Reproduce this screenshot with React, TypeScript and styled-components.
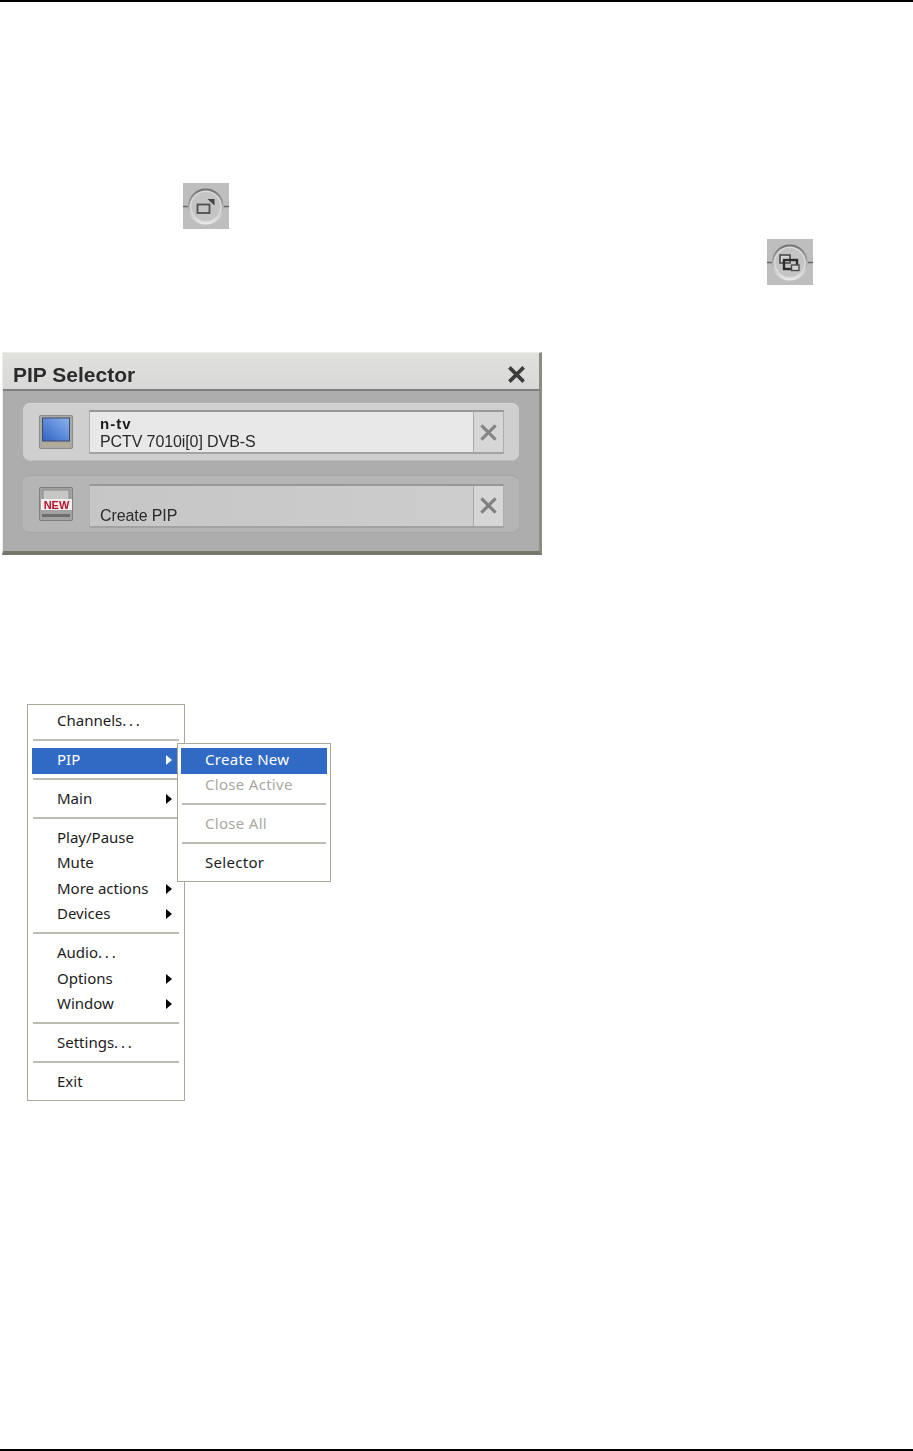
import styled, { createGlobalStyle } from "styled-components";

const GlobalStyle = createGlobalStyle`
  html, body {
    margin: 0;
    padding: 0;
    background: #ffffff;
  }
`;

const Page = styled.div`
  width: 913px;
  height: 1451px;
  display: flex;
  flex-direction: column;
  overflow: hidden;
`;

const Rule = styled.div`
  height: 2px;
  background: #000;
  flex: none;
`;

const Content = styled.div`
  flex: 1;
  display: flex;
  flex-direction: column;
`;

const IconRow = styled.div<{ $left: number; $top: number }>`
  padding-left: ${(p) => p.$left}px;
  margin-top: ${(p) => p.$top}px;
  height: 46px;
  line-height: 0;
  svg {
    filter: blur(0.5px);
  }
`;

const Selector = styled.div`
  box-sizing: border-box;
  margin: 67px 0 0 2px;
  width: 540px;
  height: 203px;
  display: flex;
  flex-direction: column;
  background: #adadad;
  border-style: solid;
  border-width: 1px 3px 4px 1px;
  border-color: #efeee6 #8d8c80 #77766a #efeee6;
  filter: blur(0.6px);
  font-family: "Liberation Sans", Arial, sans-serif;
`;

const TitleBar = styled.div`
  box-sizing: border-box;
  height: 38px;
  flex: none;
  display: flex;
  align-items: center;
  justify-content: space-between;
  padding: 7px 13px 0 10px;
  background: linear-gradient(#e0e0dd, #d8d8d8);
  border-bottom: 2px solid #7f7f7f;
`;

const Title = styled.div`
  font-size: 21px;
  font-weight: 700;
  color: #2b2b2b;
`;

const Rows = styled.div`
  display: flex;
  flex-direction: column;
  gap: 14px;
  padding: 12px 20px 0 20px;
`;

const Row = styled.div<{ $active?: boolean }>`
  box-sizing: border-box;
  height: 58px;
  display: flex;
  align-items: center;
  padding: ${(p) => (p.$active ? 0 : 3)}px 15px 0 16px;
  border-radius: 7px;
  background: ${(p) => (p.$active ? "#cfcfcf" : "#b5b5b5")};
  border-top: 1px solid ${(p) => (p.$active ? "#d8d8d8" : "#a4a4a4")};
  border-bottom: 1px solid ${(p) => (p.$active ? "#c0c0c0" : "#a6a6a6")};
`;

const Thumb = styled.div<{ $lift?: number }>`
  width: 34px;
  height: 34px;
  flex: none;
  line-height: 0;
  margin-top: ${(p) => -(p.$lift ?? 0)}px;
`;

const Field = styled.div<{ $active?: boolean }>`
  box-sizing: border-box;
  margin-left: 16px;
  width: 385px;
  height: 44px;
  padding: 0 0 1px 10px;
  display: flex;
  flex-direction: column;
  justify-content: flex-end;
  background: ${(p) =>
    p.$active ? "#e8e8e8" : "linear-gradient(90deg, #c6c6c6, #cdcdcd)"};
  border-top: 2px solid #989898;
  border-bottom: 2px solid #a2a2a2;
  border-left: 1px solid #b0b0b0;
  color: #222;
`;

const ChannelName = styled.div`
  font-size: 15px;
  font-weight: 700;
  line-height: 16px;
  letter-spacing: 1px;
  color: #1a1a1a;
`;

const ChannelLine = styled.div`
  font-size: 16px;
  line-height: 19px;
  letter-spacing: -0.1px;
  color: #2a2a2a;
`;

const RemoveBox = styled.div`
  box-sizing: border-box;
  width: 31px;
  height: 44px;
  flex: none;
  display: flex;
  align-items: center;
  justify-content: center;
  background: #d6d6d6;
  border-top: 2px solid #989898;
  border-bottom: 2px solid #a2a2a2;
  border-left: 1px solid #a8a8a8;
  border-right: 1px solid #aeaeae;
`;

const MenuWrap = styled.div`
  position: relative;
  margin: 149px 0 0 27px;
  width: 158px;
  filter: blur(0.45px);
  font-family: "Noto Sans", Tahoma, sans-serif;
  font-size: 15px;
`;

const MenuBox = styled.div`
  box-sizing: border-box;
  width: 100%;
  padding: 4px;
  background: #fff;
  border: 1px solid #a9a89f;
`;

const SubBox = styled(MenuBox)`
  position: absolute;
  left: 150px;
  top: 39px;
  width: 154px;
  padding: 4px 3px;
  letter-spacing: 0.3px;
`;

const MenuRow = styled.div<{ $hot?: boolean; $off?: boolean; $pad: number }>`
  box-sizing: border-box;
  height: 25.5px;
  display: flex;
  align-items: center;
  justify-content: space-between;
  padding: 0 8px 4px ${(p) => p.$pad}px;
  background: ${(p) => (p.$hot ? "#316ac5" : "transparent")};
  color: ${(p) => (p.$hot ? "#fff" : p.$off ? "#a9a89f" : "#1c1c1c")};
`;

const Dots = styled.span`
  letter-spacing: 2.8px;
`;

const Separator = styled.div`
  box-sizing: border-box;
  height: 13.5px;
  display: flex;
  align-items: center;
  padding: 0 1px 3px;
  &::after {
    content: "";
    flex: 1;
    height: 2px;
    background: #bdbcb3;
  }
`;

const Arrow = styled.span<{ $hot?: boolean }>`
  width: 0;
  height: 0;
  margin-top: 2px;
  border-style: solid;
  border-width: 5px 0 5px 6px;
  border-color: transparent transparent transparent ${(p) => (p.$hot ? "#fff" : "#000")};
`;

const RoundIcon = ({ children }: { children: React.ReactNode }) => (
  <svg width="46" height="46" viewBox="0 0 46 46">
    <defs>
      <linearGradient id="ringGrad" x1="0" y1="0" x2="0" y2="1">
        <stop offset="0" stopColor="#6e6e6e" />
        <stop offset="1" stopColor="#ececec" />
      </linearGradient>
    </defs>
    <rect width="46" height="46" fill="#bebebe" />
    <path d="M0 23.5H5M41 23.5H46" stroke="#666" strokeWidth="1.4" />
    <circle cx="22.8" cy="23.5" r="18" fill="url(#ringGrad)" />
    <circle cx="22.8" cy="23.5" r="16" fill="#dcdcdc" />
    <circle cx="22.8" cy="23.5" r="14.5" fill="#c4c4c4" />
    {children}
  </svg>
);

const CloseMark = ({ size, color, width }: { size: number; color: string; width: number }) => (
  <svg width={size} height={size} viewBox="0 0 16 16">
    <path d="M2 2L14 14M14 2L2 14" stroke={color} strokeWidth={width} />
  </svg>
);

const ScreenThumb = () => (
  <svg width="34" height="34" viewBox="0 0 34 34">
    <defs>
      <linearGradient id="blueGrad" x1="0" y1="1" x2="1" y2="0">
        <stop offset="0" stopColor="#2f62c4" />
        <stop offset="1" stopColor="#8db4ef" />
      </linearGradient>
    </defs>
    <rect x="0.5" y="0.5" width="33" height="33" rx="1" fill="#a9a9a7" stroke="#8a8a8a" />
    <rect x="3.5" y="3" width="27" height="23" fill="url(#blueGrad)" stroke="#3e4d66" />
    <rect x="3" y="28" width="28" height="4" fill="#b3aa99" />
  </svg>
);

const NewThumb = () => (
  <svg width="34" height="34" viewBox="0 0 34 34">
    <rect x="0.5" y="0.5" width="33" height="33" rx="1" fill="#a2a2a2" stroke="#7e7e7e" />
    <rect x="4" y="3" width="26" height="10" fill="#c6c6c4" stroke="#8a8a8a" />
    <rect x="2" y="12" width="31" height="11" fill="#f3eeee" />
    <text
      x="17.5"
      y="21.5"
      textAnchor="middle"
      fontFamily="Liberation Sans, Arial, sans-serif"
      fontSize="11"
      fontWeight="700"
      fill="#b3142c"
    >
      NEW
    </text>
    <rect x="3" y="27" width="28" height="3" fill="#6d6d6d" />
  </svg>
);

type MenuEntry =
  | "sep"
  | { label: string; dots?: boolean; arrow?: boolean; hot?: boolean; off?: boolean };

const mainMenu: MenuEntry[] = [
  { label: "Channels", dots: true },
  "sep",
  { label: "PIP", arrow: true, hot: true },
  "sep",
  { label: "Main", arrow: true },
  "sep",
  { label: "Play/Pause" },
  { label: "Mute" },
  { label: "More actions", arrow: true },
  { label: "Devices", arrow: true },
  "sep",
  { label: "Audio", dots: true },
  { label: "Options", arrow: true },
  { label: "Window", arrow: true },
  "sep",
  { label: "Settings", dots: true },
  "sep",
  { label: "Exit" },
];

const pipMenu: MenuEntry[] = [
  { label: "Create New", hot: true },
  { label: "Close Active", off: true },
  "sep",
  { label: "Close All", off: true },
  "sep",
  { label: "Selector" },
];

const renderEntries = (entries: MenuEntry[], pad: number) =>
  entries.map((entry, i) =>
    entry === "sep" ? (
      <Separator key={i} />
    ) : (
      <MenuRow key={i} $hot={entry.hot} $off={entry.off} $pad={pad}>
        <span>
          {entry.label}
          {entry.dots && <Dots>...</Dots>}
        </span>
        {entry.arrow && <Arrow $hot={entry.hot} />}
      </MenuRow>
    )
  );

const App = () => {
  return (
    <Page>
      <GlobalStyle />
      <Rule />
      <Content>
        <IconRow $left={183} $top={181}>
          <RoundIcon>
            <rect x="14.5" y="21.5" width="12" height="8.5" fill="none" stroke="#4f4f4f" strokeWidth="1.8" />
            <path d="M24.5 16H31.5V22.5Z" fill="#454545" />
          </RoundIcon>
        </IconRow>
        <IconRow $left={767} $top={10}>
          <RoundIcon>
            <rect x="13" y="16" width="10" height="8" fill="#d4d4d4" stroke="#4a4a4a" strokeWidth="1.6" />
            <rect x="17" y="21" width="13" height="9" fill="none" stroke="#2c2c2c" strokeWidth="2.4" />
            <rect x="24.5" y="26" width="7.5" height="5.5" fill="#d4d4d4" stroke="#4a4a4a" strokeWidth="1.4" />
          </RoundIcon>
        </IconRow>

        <Selector>
          <TitleBar>
            <Title>PIP Selector</Title>
            <CloseMark size={19} color="#3c3c3c" width={3} />
          </TitleBar>
          <Rows>
            <Row $active>
              <Thumb>
                <ScreenThumb />
              </Thumb>
              <Field $active>
                <ChannelName>n-tv</ChannelName>
                <ChannelLine>PCTV 7010i[0] DVB-S</ChannelLine>
              </Field>
              <RemoveBox>
                <CloseMark size={19} color="#858585" width={2.6} />
              </RemoveBox>
            </Row>
            <Row>
              <Thumb $lift={3}>
                <NewThumb />
              </Thumb>
              <Field>
                <ChannelLine>Create PIP</ChannelLine>
              </Field>
              <RemoveBox>
                <CloseMark size={19} color="#808080" width={2.6} />
              </RemoveBox>
            </Row>
          </Rows>
        </Selector>

        <MenuWrap>
          <MenuBox>{renderEntries(mainMenu, 25)}</MenuBox>
          <SubBox>{renderEntries(pipMenu, 24)}</SubBox>
        </MenuWrap>
      </Content>
      <Rule />
    </Page>
  );
};

export default App;
